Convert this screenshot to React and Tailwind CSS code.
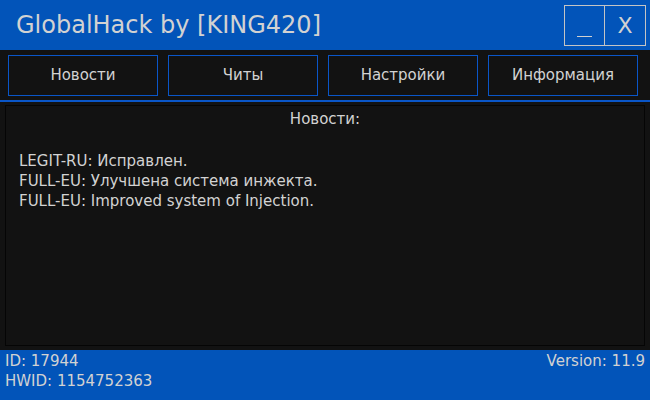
// GlobalHack loader window: title bar, tab row, news panel, status footer
const tabs = ["Новости", "Читы", "Настройки", "Информация"];

const news = [
  "LEGIT-RU: Исправлен.",
  "FULL-EU: Улучшена система инжекта.",
  "FULL-EU: Improved system of Injection.",
];

export default function App() {
  return (
    <div
      className="w-[650px] h-[400px] flex flex-col bg-[#121212] text-[#d2d2d2] overflow-hidden"
      style={{ fontFamily: '"DejaVu Sans", Verdana, sans-serif' }}
    >
      {/* Title bar */}
      <div className="h-[50px] bg-[#0254b9] flex items-center justify-between pl-4 pr-[4px]">
        <div className="text-[24px] leading-none">GlobalHack by [KING420]</div>
        <div className="flex h-[41px] self-start mt-[5px]">
          <button className="w-[41px] h-full border border-[#c4c4c4] flex items-end justify-center pb-[8px]">
            <span className="block w-[15px] h-[1px] bg-[#d0d0d0]" />
          </button>
          <button className="w-[41px] h-full border border-l-0 border-[#c4c4c4] text-[22px] leading-none flex items-center justify-center">
            X
          </button>
        </div>
      </div>

      {/* Tabs */}
      <div className="h-[50px] flex gap-[10px] pl-2 pt-[5px]">
        {tabs.map((t) => (
          <button
            key={t}
            className="w-[150px] h-[41px] border border-[#0a56c8] text-[15px] flex items-center justify-center"
          >
            {t}
          </button>
        ))}
      </div>
      <div className="h-[2px] bg-[#0a56c8]" />

      {/* News panel */}
      <div className="flex-1 px-[5px] pt-[3px] pb-[4px] flex">
        <div className="flex-1 border border-[#050505] text-[15px] leading-[20px] px-[13px] pt-[3px]">
          <div className="text-center">Новости:</div>
          <div className="mt-[22px]">
            {news.map((n) => (
              <div key={n}>{n}</div>
            ))}
          </div>
        </div>
      </div>

      {/* Footer */}
      <div className="h-[50px] bg-[#0254b9] flex justify-between px-[5px] text-[15px] leading-[20px] pt-[1px]">
        <div>
          <div>ID: 17944</div>
          <div>HWID: 1154752363</div>
        </div>
        <div>Version: 11.9</div>
      </div>
    </div>
  );
}
